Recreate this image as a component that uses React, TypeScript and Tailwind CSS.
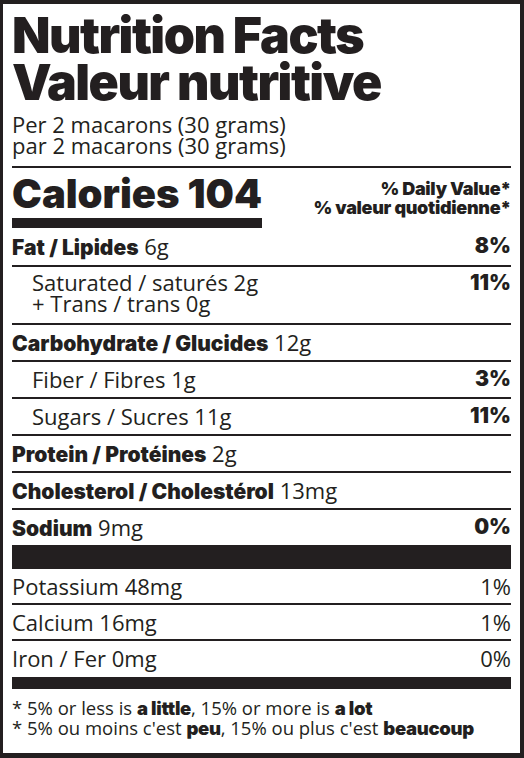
import React from "react";

const H = "font-['Inter','Roboto',sans-serif] font-black";
const B = "font-['Open_Sans','Liberation_Sans',sans-serif]";

function Row({
  label,
  amount,
  dv,
  indent,
  bold = true,
}: {
  label: string;
  amount: string;
  dv?: string;
  indent?: boolean;
  bold?: boolean;
}) {
  return (
    <div className="flex justify-between border-t-2 border-[#231f20] h-[37px] pt-[5px] leading-[24px] text-[22px]">
      <div className={`${indent ? "pl-[20px]" : ""}`}>
        {bold ? (
          <span className={`${H} text-[21px]`}>{label}</span>
        ) : (
          <span className={B}>{label}</span>
        )}
        <span className={B}> {amount}</span>
      </div>
      {dv && <div className={`${H} text-[21px]`}>{dv}</div>}
    </div>
  );
}

function MinRow({ label, dv, last }: { label: string; dv: string; last?: boolean }) {
  return (
    <div
      className={`flex justify-between ${B} text-[22px] h-[36px] pt-[5px] leading-[24px] ${
        last ? "" : "border-b-2 border-[#231f20]"
      }`}
    >
      <span>{label}</span>
      <span>{dv}</span>
    </div>
  );
}

export default function App() {
  return (
    <div className="w-[524px] h-[758px] bg-white border-[#231f20] border-l-[3px] border-t-4 border-r-4 border-b-[5px] pl-[9px] pr-[9px] text-[#231f20] overflow-hidden">
      <div className={`${H} text-[50px] leading-[47px] tracking-[-1.5px] pt-[8px]`}>
        <div>Nutrition Facts</div>
        <div>Valeur nutritive</div>
      </div>
      <div className={`${B} text-[22px] leading-[21px] mt-[8px] pb-[10px]`}>
        <div>Per 2 macarons (30 grams)</div>
        <div>par 2 macarons (30 grams)</div>
      </div>
      <div className="border-t-2 border-[#231f20] flex justify-between pt-[6px]">
        <div>
          <div className={`${H} text-[40px] leading-[40px] tracking-[0px] border-b-[10px] border-[#231f20] pb-[4px]`}>
            Calories 104
          </div>
        </div>
        <div className={`${H} text-[18px] leading-[19px] text-right pt-[5px] tracking-[-0.3px]`}>
          <div>% Daily Value*</div>
          <div>% valeur quotidienne*</div>
        </div>
      </div>
      <div className="flex justify-between h-[37px] pt-[6px] leading-[24px] text-[21px]">
        <div>
          <span className={H}>Fat / Lipides</span>
          <span className={`${B} text-[22px]`}> 6g</span>
        </div>
        <div className={H}>8%</div>
      </div>
      <div className="flex justify-between border-t-2 border-[#231f20] h-[58px] pt-[5px] leading-[21px] text-[22px]">
        <div className={`${B} pl-[20px]`}>
          <div>Saturated / saturés 2g</div>
          <div>+ Trans / trans 0g</div>
        </div>
        <div className={`${H} text-[21px]`}>11%</div>
      </div>
      <Row label="Carbohydrate / Glucides" amount="12g" />
      <Row label="Fiber / Fibres" amount="1g" dv="3%" indent bold={false} />
      <Row label="Sugars / Sucres" amount="11g" dv="11%" indent bold={false} />
      <Row label="Protein / Protéines" amount="2g" />
      <Row label="Cholesterol / Cholestérol" amount="13mg" />
      <Row label="Sodium" amount="9mg" dv="0%" />
      <div className="h-[24px] bg-[#231f20]" />
      <MinRow label="Potassium 48mg" dv="1%" />
      <MinRow label="Calcium 16mg" dv="1%" />
      <MinRow label="Iron / Fer 0mg" dv="0%" last />
      <div className="h-[12px] bg-[#231f20]" />
      <div className={`${B} text-[18.5px] leading-[19px] pt-[9px]`}>
        <div>
          * 5% or less is <span className={`${H} tracking-[-0.3px]`}>a little</span>, 15% or more is{" "}
          <span className={`${H} tracking-[-0.3px]`}>a lot</span>
        </div>
        <div>
          * 5% ou moins c'est <span className={`${H} tracking-[-0.3px]`}>peu</span>, 15% ou plus c'est{" "}
          <span className={`${H} tracking-[-0.3px]`}>beaucoup</span>
        </div>
      </div>
    </div>
  );
}
